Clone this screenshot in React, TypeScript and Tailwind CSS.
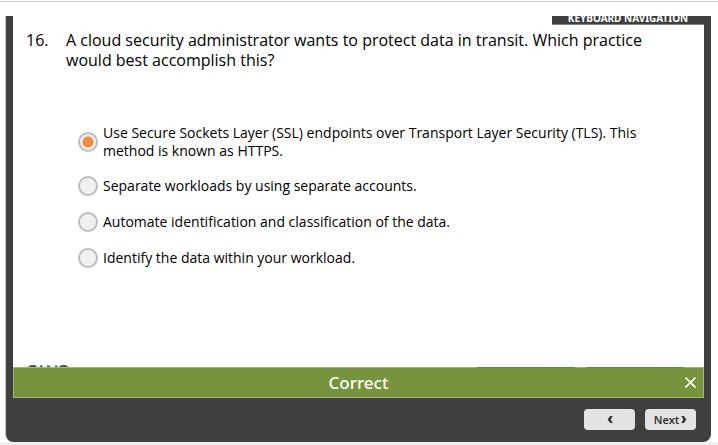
import { useState } from "react";

const options = [
  "Use Secure Sockets Layer (SSL) endpoints over Transport Layer Security (TLS). This method is known as HTTPS.",
  "Separate workloads by using separate accounts.",
  "Automate identification and classification of the data.",
  "Identify the data within your workload.",
];

function LogoTop() {
  return (
    <svg className="ml-[15px] block h-[2px] w-10" viewBox="0 0 40 2" aria-hidden="true">
      <g fill="#4b5563">
        <path d="M0 2 Q1.500 0 4 0 H6 Q8 0 9 2Z" />
        <path d="M12 .5h2.500V2H12zM19 .5h3V2h-3zM27 .5h2.500V2H27z" />
        <path d="M31 2 Q32 0 35 0h2Q39 0 40 1.500V2Z" />
      </g>
    </svg>
  );
}

function Chevron({ left = false }: { left?: boolean }) {
  return (
    <svg className="h-[7px] w-[6px]" viewBox="0 0 6 7" fill="#333333" aria-hidden="true">
      <path d={left ? "M3.200 0H5.800L3.600 3.500 5.800 7H3.200L.6 3.500Z" : "M2.800 0H.2L2.400 3.500 .2 7H2.800L5.400 3.500Z"} />
    </svg>
  );
}

export default function App() {
  const [selected, setSelected] = useState(0);
  const [feedback, setFeedback] = useState(true);

  return (
    <div className="flex min-h-screen flex-col bg-white font-['Noto_Sans',sans-serif] text-black">
      <div className="mt-px h-px bg-[#cccccc]" />
      <main className="mt-3.5 ml-[5px] mr-[7px] flex grow flex-col overflow-hidden rounded-b-lg border-l border-[#c8c8c8] bg-[#404040]">
        <section className="mx-[7px] flex grow flex-col bg-white">
          <header className="flex h-[9px] w-[152px] items-end justify-center self-end overflow-hidden border-b border-[#808080] bg-[#404040]">
            <button className="text-[10px] leading-[12px] font-bold whitespace-nowrap text-white">KEYBOARD NAVIGATION</button>
          </header>
          <form className="flex grow flex-col pr-12 font-['Open_Sans',sans-serif]">
            <fieldset>
              <legend className="flex pt-[5px] pl-[13px] text-base leading-5">
                <span className="w-10 shrink-0">16.</span>
                <span>A cloud security administrator wants to protect data in transit. Which practice would best accomplish this?</span>
              </legend>
              <div className="mt-[54px] flex flex-col gap-4 pl-[65px] text-sm leading-[18px]">
                {options.map((option, index) => (
                  <label key={option} className="flex min-h-5 items-center gap-[5px]">
                    <input
                      type="radio"
                      name="answer"
                      checked={selected === index}
                      onChange={() => setSelected(index)}
                      className="size-5 shrink-0 appearance-none rounded-full border-2 border-[#bdbdbd] bg-[#f0f0f0] checked:bg-[radial-gradient(circle,#f28c3c_0_5px,#f0f0f0_6px)]"
                    />
                    <span>{option}</span>
                  </label>
                ))}
              </div>
            </fieldset>
          </form>
          <LogoTop />
        </section>
        {feedback && (
          <div role="status" className="mx-[7px] border-x border-b border-[#a3b77c] bg-[#77933c] text-white">
            <div className="flex h-px justify-end gap-[11px] bg-[#a3b77c] pr-[19px]">
              <span className="w-[98px] bg-[#678454]" />
              <span className="w-[98px] bg-[#678454]" />
            </div>
            <div className="grid h-[29px] grid-cols-[26px_1fr_26px] items-center">
              <span className="col-start-2 text-center text-[17px] leading-6 font-medium">Correct</span>
              <button aria-label="Close feedback" onClick={() => setFeedback(false)} className="flex justify-center">
                <svg className="size-[11px]" viewBox="0 0 10 10" fill="none" stroke="currentColor" strokeWidth="1.500" aria-hidden="true">
                  <path d="M.5 .5 9.500 9.500M9.500 .5 .5 9.500" />
                </svg>
              </button>
            </div>
          </div>
        )}
        <footer className="flex h-11 items-center justify-end gap-[10px] pr-[15px] pb-px">
          <button aria-label="Previous" className="flex h-[21px] w-[51px] items-center justify-center rounded bg-[#e3e3e3]">
            <Chevron left />
          </button>
          <button className="flex h-[21px] w-[51px] items-center justify-center gap-[2px] rounded bg-[#e3e3e3] text-[11px] leading-4 font-semibold text-[#333333]">
            Next
            <Chevron />
          </button>
        </footer>
      </main>
      <div className="h-[3px] bg-[#f0f0f0]" />
    </div>
  );
}
